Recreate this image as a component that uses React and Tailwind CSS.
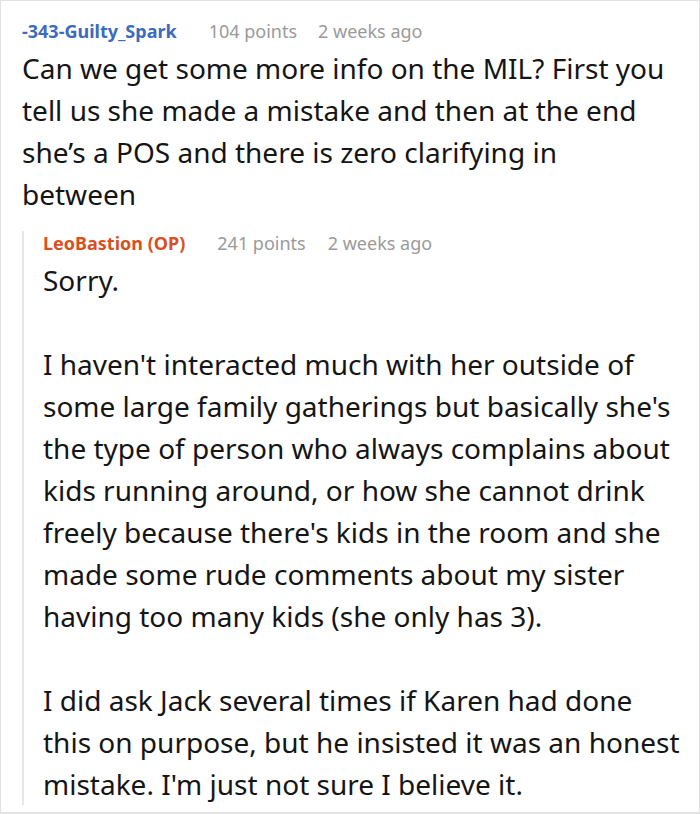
export default function App() {
  const meta = "text-[18px] leading-[24px] text-[#9a9a9a]";
  return (
    <div className="w-[700px] h-[814px] overflow-hidden bg-white border border-b-2 border-[#e2e2e2] font-['Noto_Sans','Open_Sans',sans-serif] text-[#151515]">
      <div className="pl-[21px] pr-[14px] pt-[18px]">
        <div className="flex items-baseline">
          <span className="text-[18px] leading-[24px] font-bold text-[#3b6bbd]">-343-Guilty_Spark</span>
          <span className={`${meta} ml-[32px]`}>104 points</span>
          <span className={`${meta} ml-[21px]`}>2 weeks ago</span>
        </div>
        <p className="w-[646px] text-[28px] leading-[42px] mt-[4px]">
          Can we get some more info on the MIL? First you tell us she made a mistake and then at the end she’s a POS and there is zero clarifying in between
        </p>
        <div className="mt-[27px] border-l-2 border-[#e6e6e6] pl-[19px]">
          <div className="flex items-baseline -mt-[11px]">
            <span className="text-[18px] leading-[24px] font-bold text-[#d9501f]">LeoBastion (OP)</span>
            <span className={`${meta} ml-[32px]`}>241 points</span>
            <span className={`${meta} ml-[22px]`}>2 weeks ago</span>
          </div>
          <div className="text-[28px] leading-[42px] mt-[4px]">
            <p>Sorry.</p>
            <p className="mt-[42px]">I haven't interacted much with her outside of some large family gatherings but basically she's the type of person who always complains about kids running around, or how she cannot drink freely because there's kids in the room and she made some rude comments about my sister having too many kids (she only has 3).</p>
            <p className="mt-[42px] -mb-[8px]">I did ask Jack several times if Karen had done this on purpose, but he insisted it was an honest mistake. I'm just not sure I believe it.</p>
          </div>
        </div>
      </div>
    </div>
  );
}
